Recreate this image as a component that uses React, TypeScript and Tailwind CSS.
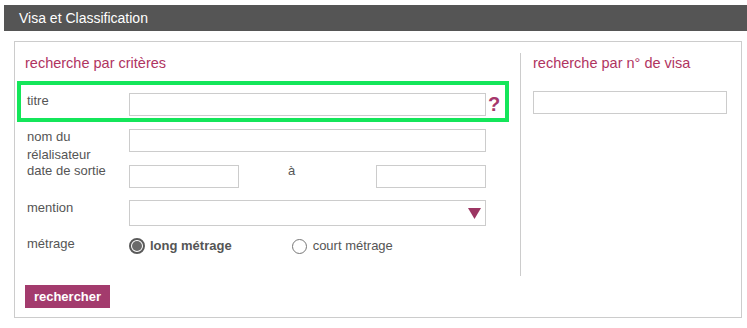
import React from "react";

const font = { fontFamily: '"Liberation Sans", Arial, sans-serif' };

export default function App() {
  return (
    <div className="relative w-[747px] h-[328px] bg-white pl-[4px] pt-[5px]" style={font}>
      <div className="h-[26px] bg-[#555555] text-white text-[14px] leading-[26px] pl-[15px]">
        Visa et Classification
      </div>
      <div className="ml-[10px] mt-[10px] w-[728px] h-[277px] border border-[#cccccc] flex flex-col">
        <div className="flex">
          {/* left column */}
          <div className="w-[505px] pl-[10px] text-[13px] text-[#555555]">
            <div className="mt-[12px] h-[18px] text-[14.5px] leading-[18px] text-[#b0345f]">recherche par critères</div>
            <div className="flex h-[36px] mt-[21px]">
              <div className="w-[104px] pl-[2px] leading-[18px] -mt-[1px]">titre</div>
              <input className="w-[357px] h-[23px] border border-[#cccccc] outline-none" />
              <span className="ml-[2px] text-[20px] font-bold leading-[23px] text-[#a6376c]">?</span>
            </div>
            <div className="flex h-[36px]">
              <div className="w-[104px] pl-[2px] leading-[18px] -mt-[1px]">nom du<br />rélalisateur</div>
              <input className="w-[357px] h-[23px] border border-[#cccccc] outline-none" />
            </div>
            <div className="flex h-[35px]">
              <div className="w-[104px] pl-[2px] leading-[18px] -mt-[3px]">date de sortie</div>
              <input className="w-[110px] h-[23px] border border-[#cccccc] outline-none" />
              <div className="w-[137px] pl-[49px] leading-[18px] -mt-[3px]">à</div>
              <input className="w-[110px] h-[23px] border border-[#cccccc] outline-none" />
            </div>
            <div className="flex h-[36px]">
              <div className="w-[104px] pl-[2px] leading-[18px] -mt-[1px]">mention</div>
              <div className="relative w-[357px] h-[26px] border border-[#cccccc]">
                <svg className="absolute right-[4px] top-[7px]" width="13" height="11" viewBox="0 0 13 11">
                  <polygon points="0,0 13,0 6.5,11" fill="#9c3563" />
                </svg>
              </div>
            </div>
            <div className="flex h-[22px] items-start">
              <div className="w-[104px] pl-[2px] leading-[18px] -mt-[1px]">métrage</div>
              <div className="flex items-center mt-[1px]">
                <span className="w-[16px] h-[16px] rounded-full border-2 border-[#5a5a5a] bg-white flex items-center justify-center">
                  <span className="w-[10px] h-[10px] rounded-full bg-[#6a6a6a]" />
                </span>
                <span className="ml-[5px] font-bold leading-[18px]">long métrage</span>
              </div>
              <div className="flex items-center mt-[1px] ml-[60px]">
                <span className="w-[15px] h-[15px] rounded-full border border-[#777777] bg-white" />
                <span className="ml-[6px] leading-[18px]">court métrage</span>
              </div>
            </div>
          </div>
          {/* divider */}
          <div className="w-px bg-[#cccccc] mt-[11px] h-[223px]" />
          {/* right column */}
          <div className="pl-[12px]">
            <div className="mt-[12px] h-[18px] text-[14.5px] leading-[18px] text-[#b0345f]">recherche par n° de visa</div>
            <input className="mt-[19px] w-[194px] h-[23px] border border-[#cccccc] outline-none" />
          </div>
        </div>
        <div className="pl-[10px] mt-[8px]">
          <button className="w-[85px] h-[23px] bg-[#a33b6d] text-white font-bold text-[13px] leading-[23px]">rechercher</button>
        </div>
      </div>
      <div className="absolute left-[17px] top-[81px] w-[492px] h-[41px] border-[4px] border-[#14e65a] pointer-events-none" />
    </div>
  );
}
